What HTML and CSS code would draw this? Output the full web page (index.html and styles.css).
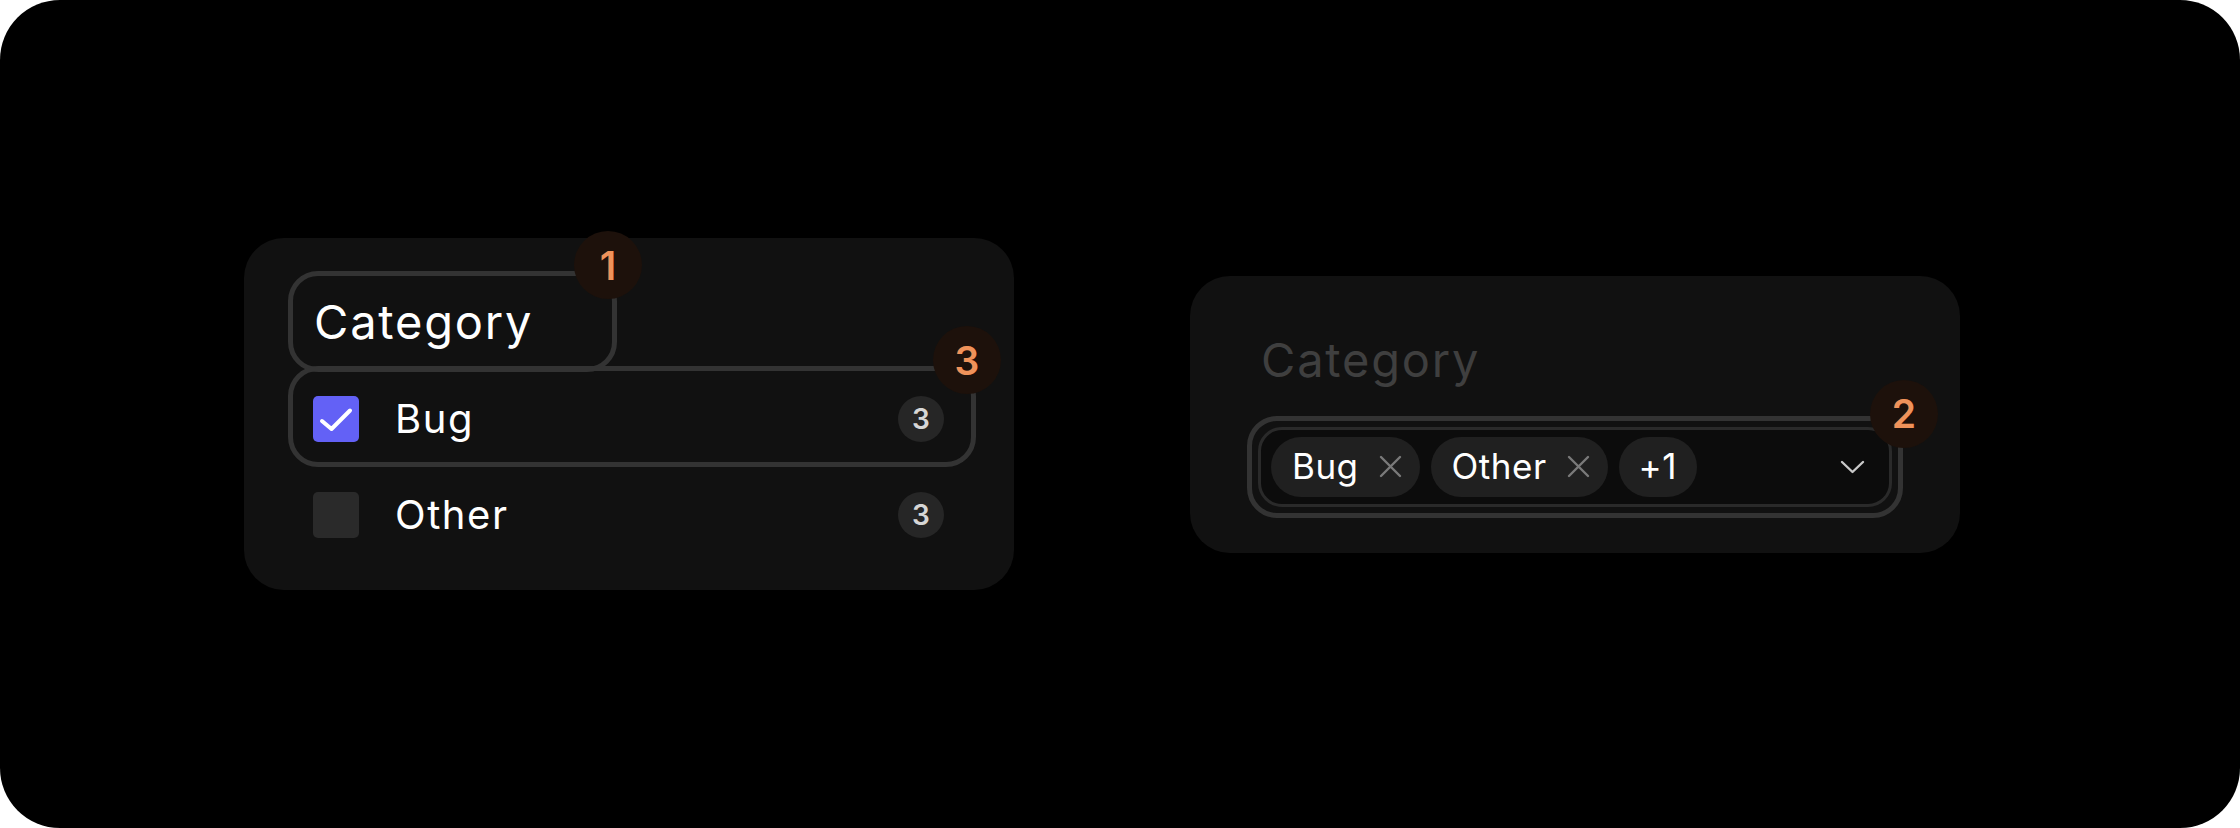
FILE: index.html
```html
<!DOCTYPE html>
<html lang="en">
<head>
  <meta charset="UTF-8">
  <title>Category Filter</title>
  <link rel="stylesheet" href="styles.css">
</head>
<body>

<div class="frame">

  <!-- Filter list -->
  <div class="card filter-card">
    <div class="label-box">
      Category
      <span class="marker">1</span>
    </div>

    <div class="option option-focus">
      <span class="check on">
        <svg width="46" height="46" viewBox="0 0 46 46"><path d="M9 25 L18.5 33 L37 14.5" fill="none" stroke="#fff" stroke-width="4" stroke-linecap="round" stroke-linejoin="round"/></svg>
      </span>
      <span class="option-name">Bug</span>
      <span class="count">3</span>
      <span class="marker">3</span>
    </div>

    <div class="option">
      <span class="check"></span>
      <span class="option-name">Other</span>
      <span class="count">3</span>
    </div>
  </div>

  <!-- Multi select -->
  <div class="card select-card">
    <div class="select-label">Category</div>
    <div class="select-ring">
      <div class="select-box">
        <span class="chip">Bug
          <svg class="chip-x" width="23" height="23" viewBox="0 0 23 23"><path d="M2 2 L21 21 M21 2 L2 21" stroke="#7a7a7a" stroke-width="2.4" stroke-linecap="round"/></svg>
        </span>
        <span class="chip">Other
          <svg class="chip-x" width="23" height="23" viewBox="0 0 23 23"><path d="M2 2 L21 21 M21 2 L2 21" stroke="#7a7a7a" stroke-width="2.4" stroke-linecap="round"/></svg>
        </span>
        <span class="chip chip-more">+1</span>
        <svg class="chevron" width="25" height="14" viewBox="0 0 25 14"><path d="M2 2 L12.5 12 L23 2" fill="none" stroke="#c9c9c9" stroke-width="2.4" stroke-linecap="round" stroke-linejoin="round"/></svg>
      </div>
      <span class="marker">2</span>
    </div>
  </div>

</div>

</body>
</html>
```

FILE: styles.css
```css
body {
  margin: 0;
  background: #fff;
  font-family: 'Inter', 'Open Sans', sans-serif;
  color: #fff;
}

.frame {
  width: 2240px;
  height: 828px;
  box-sizing: border-box;
  background: #000;
  border-radius: 60px;
  display: flex;
  align-items: center;
  gap: 176px;
  padding-left: 244px;
}

.card {
  width: 770px;
  box-sizing: border-box;
  background: #111111;
  border-radius: 40px;
}

/* ---- left card ---- */
.filter-card {
  padding: 33px 38px 25px 44px;
}

.label-box {
  position: relative;
  width: 329px;
  height: 101px;
  box-sizing: border-box;
  border: 5px solid #333333;
  border-radius: 30px;
  padding-left: 21px;
  display: flex;
  align-items: center;
  font-size: 47px;
  letter-spacing: 1.8px;
  line-height: 1;
}

.option {
  position: relative;
  height: 101px;
  box-sizing: border-box;
  border: 5px solid transparent;
  border-radius: 30px;
  padding: 0 27px 0 20px;
  display: flex;
  align-items: center;
  margin-top: -3px;
}

.option-focus {
  border-color: #333333;
  margin-top: -6px;
  padding-top: 4px;
}

.check {
  width: 46px;
  height: 46px;
  border-radius: 5px;
  background: #2a2a2a;
  flex-shrink: 0;
}

.check.on {
  background: #6361f6;
}

.check svg {
  display: block;
}

.option-name {
  margin-left: 36px;
  font-size: 40px;
  letter-spacing: 1.6px;
  line-height: 1;
}

.count {
  margin-left: auto;
  width: 46px;
  height: 46px;
  border-radius: 50%;
  background: #262626;
  color: #d6d6d6;
  font-size: 28px;
  font-weight: 600;
  display: flex;
  align-items: center;
  justify-content: center;
}

.marker {
  position: absolute;
  right: -30px;
  top: -45px;
  width: 68px;
  height: 68px;
  border-radius: 50%;
  background: #1d110b;
  color: #ef925a;
  font-size: 39px;
  font-weight: 600;
  letter-spacing: 0;
  display: flex;
  align-items: center;
  justify-content: center;
  z-index: 2;
}

/* ---- right card ---- */
.select-card {
  padding: 60px 57px 35px 57px;
}

.select-label {
  padding-left: 14px;
  font-size: 47px;
  letter-spacing: 1.8px;
  line-height: 1;
  color: #3f3f3f;
  margin-bottom: 33px;
}

.select-ring {
  position: relative;
  border: 5px solid #333333;
  border-radius: 30px;
  padding: 6px;
}

.select-ring .marker {
  right: -40px;
  top: -41px;
}

.select-box {
  border: 3px solid #2a2a2a;
  border-radius: 24px;
  background: #0c0c0c;
  padding: 7px 24px 7px 10px;
  display: flex;
  align-items: center;
  gap: 11px;
}

.chip {
  height: 60px;
  box-sizing: border-box;
  border-radius: 30px;
  background: #202020;
  padding: 0 18px 0 21px;
  display: flex;
  align-items: center;
  font-size: 35px;
  letter-spacing: 0.5px;
  line-height: 1;
}

.chip-x {
  margin-left: 20px;
}

.chip-more {
  padding: 0 20px;
}

.chevron {
  margin-left: auto;
}
```
